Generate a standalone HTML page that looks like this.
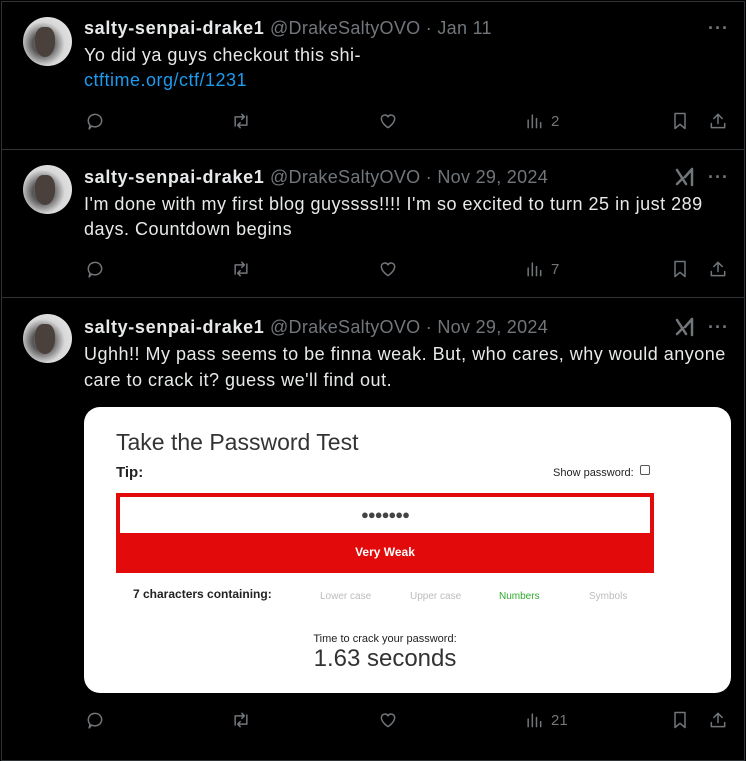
<!DOCTYPE html><html><head><meta charset="utf-8"><style>
*{margin:0;padding:0;box-sizing:border-box}
body{width:746px;height:741px;background:#000;font-family:"Liberation Sans",Arial,sans-serif;color:#e7e9ea;overflow:hidden;position:relative}
.frame{position:absolute;left:1px;top:1px;width:744px;height:760px;border:1px solid #2f3336}
.hr{position:absolute;left:1px;width:744px;height:1px;background:#2f3336}
.av{position:absolute;left:23px;width:49px;height:49px;border-radius:50%;background:radial-gradient(circle at 40% 55%,#777 0,#555 25%,#d8d8d8 55%,#eee 100%);overflow:hidden}
.av:after{content:"";position:absolute;left:12px;top:10px;width:20px;height:30px;border-radius:40% 40% 50% 50%;background:#4a403c}
.t{position:absolute;left:84px;font-size:18px;letter-spacing:.5px;line-height:25px;white-space:nowrap}
.n{font-weight:bold;color:#e7e9ea;letter-spacing:.65px}.g{color:#71767b;letter-spacing:.3px}
.a{position:absolute;color:#71767b;font-size:15px}
svg{fill:none;stroke:#71767b;stroke-width:1.8;stroke-linecap:round;stroke-linejoin:round}
.card{position:absolute;left:84px;top:407px;width:647px;height:286px;border-radius:16px;background:#fff;color:#222;font-family:"Liberation Sans",Arial,sans-serif}
</style></head><body>
<div class="frame"></div>
<div class="hr" style="top:149px"></div><div class="hr" style="top:297px"></div>

<div class="av" style="top:17px"></div>
<div class="t" style="top:16px"><span class="n">salty-senpai-drake1</span> <span class="g">@DrakeSaltyOVO · Jan 11</span></div>
<div class="t" style="top:43px">Yo did ya guys checkout this shi-</div>
<div class="t" style="top:68px;color:#1d9bf0">ctftime.org/ctf/1231</div>

<div class="av" style="top:165px"></div>
<div class="t" style="top:165px"><span class="n">salty-senpai-drake1</span> <span class="g">@DrakeSaltyOVO · Nov 29, 2024</span></div>
<div class="t" style="top:192px">I'm done with my first blog guyssss!!!! I'm so excited to turn 25 in just 289</div>
<div class="t" style="top:217px">days. Countdown begins</div>

<div class="av" style="top:314px"></div>
<div class="t" style="top:315px"><span class="n">salty-senpai-drake1</span> <span class="g">@DrakeSaltyOVO · Nov 29, 2024</span></div>
<div class="t" style="top:342px">Ughh!! My pass seems to be finna weak. But, who cares, why would anyone</div>
<div class="t" style="top:368px">care to crack it? guess we'll find out.</div>

<div class="card">
<div style="position:absolute;left:32px;top:22px;font-size:23px;color:#333">Take the Password Test</div>
<div style="position:absolute;left:32px;top:57px;font-size:15px;font-weight:bold">Tip:</div>
<div style="position:absolute;left:469px;top:60px;font-size:11px">Show password:</div>
<div style="position:absolute;left:556px;top:58px;width:10px;height:10px;border:1px solid #555;border-radius:2px"></div>
<div style="position:absolute;left:32px;top:86px;width:538px;height:80px;background:#e20a0a"></div>
<div style="position:absolute;left:36px;top:90px;width:530px;height:36px;background:#fff;text-align:center;font-size:13px;line-height:36px;color:#444;font-weight:bold;letter-spacing:-1px">●●●●●●●</div>
<div style="position:absolute;left:32px;top:138px;width:538px;text-align:center;color:#fff;font-weight:bold;font-size:12px">Very Weak</div>
<div style="position:absolute;left:49px;top:180px;font-size:12px;font-weight:bold">7 characters containing:</div>
<div style="position:absolute;left:236px;top:184px;font-size:10px;color:#bbb">Lower case</div>
<div style="position:absolute;left:326px;top:184px;font-size:10px;color:#bbb">Upper case</div>
<div style="position:absolute;left:415px;top:184px;font-size:10px;color:#2eaa2e">Numbers</div>
<div style="position:absolute;left:505px;top:184px;font-size:10px;color:#bbb">Symbols</div>
<div style="position:absolute;left:0;width:602px;top:226px;text-align:center;font-size:11px">Time to crack your password:</div>
<div style="position:absolute;left:0;width:602px;top:238px;text-align:center;font-size:24px;color:#333">1.63 seconds</div>
</div>

<div id="rows"></div>
<script>
const rows=[[121,'2',28],[269,'7',177],[720,'21',327]];
let h='';
rows.forEach(([y,c,hy],i)=>{
const s='position:absolute;top:'+(y-10)+'px;width:20px;height:20px;';
h+=`<svg style="${s}left:85px" viewBox="0 0 24 24"><path d="M4 11.5a8 7.5 0 1 1 4 6.5l-3 3.5 1-4.5A7.5 7.5 0 0 1 4 11.5z"/></svg>`;
h+=`<svg style="${s}left:231px" viewBox="0 0 24 24"><path d="M5 18V7h11M13 4l3 3-3 3M19 6v11H8M11 20l-3-3 3-3"/></svg>`;
h+=`<svg style="${s}left:378px" viewBox="0 0 24 24"><path d="M12 20s-8-5-8-11a4.3 4.3 0 0 1 8-2 4.3 4.3 0 0 1 8 2c0 6-8 11-8 11z"/></svg>`;
h+=`<svg style="${s}left:524px" viewBox="0 0 24 24"><path d="M5 20V11M10 20V5M15 20V9M20 20v-6"/></svg>`;
h+=`<div class="a" style="left:551px;top:${y-8}px">${c}</div>`;
h+=`<svg style="${s}left:670px" viewBox="0 0 24 24"><path d="M6 3h12v18l-6-5-6 5z"/></svg>`;
h+=`<svg style="${s}left:708px" viewBox="0 0 24 24"><path d="M12 15V4M7 9l5-5 5 5M4 15v5h16v-5"/></svg>`;
h+=`<div class="a" style="left:708px;top:${hy-10}px;font-size:18px;letter-spacing:1px;font-weight:bold">···</div>`;
if(i>0)h+=`<svg style="position:absolute;left:674px;top:${hy-10}px;width:22px;height:20px" viewBox="0 0 22 20"><path d="M3 3l9 14M3 17l6-6M18 2v16M18 2l-7 8" stroke-width="2.5"/></svg>`;
});
document.getElementById('rows').innerHTML=h;
</script>
</body></html>
